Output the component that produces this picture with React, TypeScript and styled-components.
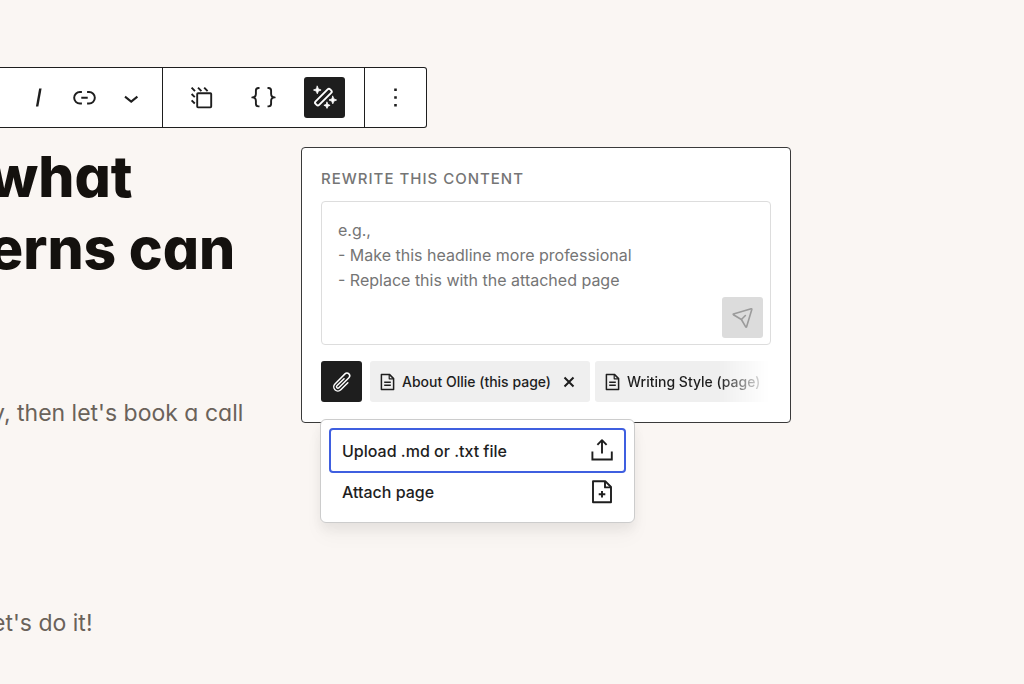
import React from "react";
import styled, { createGlobalStyle, css } from "styled-components";

const ink = "#1e1e1e";
const muted = "#757575";

const GlobalStyle = createGlobalStyle`
  *, *::before, *::after { box-sizing: border-box; }
  body {
    margin: 0;
    background: #faf6f3;
    color: ${ink};
    font-family: Inter, "Liberation Sans", sans-serif;
  }
  button, textarea { font: inherit; color: inherit; }
`;

const Canvas = styled.main`
  position: relative;
  min-height: 100vh;
  padding-top: 67px;
  overflow: hidden;
`;

const ToolbarAnchor = styled.div`
  position: relative;
  display: flex;
`;

const Toolbar = styled.div`
  display: flex;
  height: 61px;
  background: #fff;
  border: 1px solid ${ink};
  border-left: 0;
  border-radius: 0 3px 3px 0;
`;

const ToolbarGroup = styled.div<{ $spread?: boolean }>`
  display: flex;
  align-items: center;
  gap: ${(p) => (p.$spread ? 20 : 5)}px;
  padding: ${(p) => (p.$spread ? "0 19px" : "0 11px 0 18px")};
  & + & {
    border-left: 1px solid ${ink};
  }
  &:last-child {
    padding: 0 10px;
  }
`;

const IconButton = styled.button<{ $tone?: "dark" | "disabled" }>`
  flex: none;
  display: flex;
  align-items: center;
  justify-content: center;
  width: 41px;
  height: 41px;
  padding: 0;
  border: 0;
  border-radius: 3px;
  background: transparent;
  ${(p) =>
    p.$tone === "dark" &&
    css`
      background: ${ink};
      color: #fff;
    `}
  ${(p) =>
    p.$tone === "disabled" &&
    css`
      background: #dcdcdc;
      color: #9b9b9b;
    `}
`;

const Copy = styled.article`
  padding-top: 13px;
  white-space: nowrap;
  font-feature-settings: "cv11";
`;

const Headline = styled.h1`
  margin: 0 0 0 -11px;
  color: #14110e;
  font-size: 57px;
  line-height: 72px;
  font-weight: 800;
`;

const Paragraph = styled.p`
  margin: 110px 0 0 -8px;
  color: #6a625a;
  font-size: 23px;
  line-height: 36px;
  & + & {
    margin-top: 174px;
  }
`;

const Popover = styled.form`
  position: absolute;
  top: 80px;
  left: 301px;
  width: 490px;
  padding: 20px 19px;
  background: #fff;
  border: 1px solid #3a3a3a;
  border-radius: 4px;
`;

const PopoverLabel = styled.label`
  display: block;
  margin-bottom: 11px;
  color: ${muted};
  font-size: 15px;
  line-height: 22px;
  font-weight: 500;
  letter-spacing: 1px;
  text-transform: uppercase;
`;

const PromptBox = styled.div`
  display: flex;
  align-items: flex-end;
  height: 144px;
  padding-right: 7px;
  padding-bottom: 6px;
  border: 1px solid #dddddd;
  border-radius: 4px;
`;

const PromptInput = styled.textarea`
  flex: 1;
  min-width: 0;
  align-self: stretch;
  padding: 16px 0 0 16px;
  border: 0;
  outline: 0;
  resize: none;
  background: transparent;
  font-size: 16px;
  line-height: 25px;
  &::placeholder {
    color: ${muted};
    opacity: 1;
  }
`;

const AttachmentRow = styled.div`
  display: flex;
  gap: 8px;
  margin-top: 16px;
`;

const AttachAnchor = styled.div`
  position: relative;
`;

const ChipList = styled.ul`
  flex: 1;
  min-width: 0;
  display: flex;
  gap: 5px;
  margin: 0;
  padding: 0;
  overflow: hidden;
  list-style: none;
  mask-image: linear-gradient(to right, #000 calc(100% - 52px), transparent calc(100% - 2px));
`;

const Chip = styled.li`
  flex: none;
  display: flex;
  align-items: center;
  height: 41px;
  padding: 0 15px 0 10px;
  background: #efefef;
  border-radius: 3px;
  font-size: 14px;
  line-height: 20px;
  font-weight: 500;
`;

const ChipLabel = styled.span`
  margin-left: 7px;
`;

const RemoveButton = styled.button`
  display: flex;
  margin-left: 12px;
  padding: 0;
  border: 0;
  background: transparent;
`;

const Menu = styled.div`
  position: absolute;
  z-index: 1;
  top: 58px;
  left: -1px;
  width: 315px;
  padding: 10px;
  background: #fff;
  border: 1px solid #cccccc;
  border-radius: 6px;
  box-shadow: 0 6px 12px rgba(0, 0, 0, 0.06), 0 14px 20px rgba(0, 0, 0, 0.03);
`;

const MenuItem = styled.button<{ $focused?: boolean }>`
  display: flex;
  align-items: center;
  justify-content: space-between;
  width: 100%;
  height: 41px;
  padding: 0 10px 0 11px;
  border: 0;
  border-radius: 2px;
  background: transparent;
  font-size: 16px;
  line-height: 24px;
  font-weight: 500;
  outline: ${(p) => (p.$focused ? "2px solid #3f5fe0" : "0")};
`;

function WordIcon({ d }: { d: string }) {
  return (
    <svg width="31" height="31" viewBox="0 0 24 24" fill="currentColor" aria-hidden="true">
      <path d={d} />
    </svg>
  );
}

function StrokeIcon({
  size,
  box = size,
  width = 2,
  cap = "round",
  children,
}: {
  size: number;
  box?: number;
  width?: number;
  cap?: "round" | "butt";
  children: React.ReactNode;
}) {
  return (
    <svg
      width={size}
      height={size}
      viewBox={`0 0 ${box} ${box}`}
      fill="none"
      stroke="currentColor"
      strokeWidth={width}
      strokeLinecap={cap}
      strokeLinejoin="round"
      aria-hidden="true"
    >
      {children}
    </svg>
  );
}

const PageIcon = () => (
  <svg width="15" height="18" viewBox="0 0 15 18" fill="none" stroke="currentColor" strokeWidth="1.5" strokeLinejoin="round" aria-hidden="true">
    <path d="M1.4 1.4h8l4.2 4.2v11H1.4z" />
    <path d="M9.2 1.6v4.2h4.2" strokeWidth="1.2" />
    <path d="M4.2 9.3h6.6M4.2 12.3h6.6" strokeWidth="1.4" />
  </svg>
);

const CloseIcon = () => (
  <StrokeIcon size={12} width={2} cap="butt">
    <path d="M1.5 1.5l9 9M10.5 1.5l-9 9" />
  </StrokeIcon>
);

export default function App() {
  return (
    <>
      <GlobalStyle />
      <Canvas>
        <ToolbarAnchor>
          <Toolbar role="toolbar" aria-label="Block tools">
            <ToolbarGroup>
              <IconButton type="button" aria-label="Italic">
                <WordIcon d="M12.5 5L10 19h1.9l2.5-14z" />
              </IconButton>
              <IconButton type="button" aria-label="Link">
                <WordIcon d="M10 17.389H8.444A5.194 5.194 0 1 1 8.444 7H10v1.5H8.444a3.694 3.694 0 0 0 0 7.389H10v1.5ZM14 7h1.556a5.194 5.194 0 0 1 0 10.39H14v-1.5h1.556a3.694 3.694 0 0 0 0-7.39H14V7Zm-4.5 6h5v-1.5h-5V13Z" />
              </IconButton>
              <IconButton type="button" aria-label="More formatting">
                <StrokeIcon size={30} cap="butt">
                  <path d="M9 13.6l6.2 5 6.2-5" strokeLinejoin="miter" />
                </StrokeIcon>
              </IconButton>
            </ToolbarGroup>
            <ToolbarGroup $spread>
              <IconButton type="button" aria-label="Pattern">
                <StrokeIcon size={30} width={1.9} cap="butt">
                  <rect x="9.2" y="10.2" width="14" height="14.2" rx="0.8" />
                  <path d="M3.6 4.6l3.4 3.6M10 4.6l3.4 3.6M16.2 4.6l3.4 3.6M3.6 11l3.2 3.2M3.6 17.3l3.2 3.2" />
                </StrokeIcon>
              </IconButton>
              <IconButton type="button" aria-label="Custom code">
                <StrokeIcon size={31} width={1.9} cap="butt">
                  <path d="M11.5 6h-1q-2.6 0-2.6 2.6v3.2q0 3.6-3.6 3.6 3.6 0 3.6 3.6v2.8q0 2.6 2.6 2.6h1" />
                  <path d="M19.5 6h1q2.6 0 2.6 2.6v3.2q0 3.6 3.6 3.6-3.6 0-3.6 3.6v2.8q0 2.6-2.6 2.6h-1" />
                </StrokeIcon>
              </IconButton>
              <IconButton type="button" $tone="dark" aria-label="Rewrite with AI" aria-pressed="true">
                <StrokeIcon size={30} width={1.9}>
                  <rect x="3.1" y="11.6" width="20.6" height="5" rx="1.8" transform="rotate(-45 13.4 14.1)" />
                  <path
                    d="M7.3 3.2l1.1 2.7 2.7 1.1-2.7 1.1-1.1 2.7-1.1-2.7L3.5 7l2.7-1.1zM22.8 13.2l1.1 2.7 2.7 1.1-2.7 1.1-1.1 2.7-1.1-2.7-2.7-1.1 2.7-1.1zM17 19.2l.9 2.2 2.2.9-2.2.9-.9 2.2-.9-2.2-2.2-.9 2.2-.9z"
                    fill="currentColor"
                    strokeWidth="0.8"
                  />
                </StrokeIcon>
              </IconButton>
            </ToolbarGroup>
            <ToolbarGroup>
              <IconButton type="button" aria-label="Options">
                <WordIcon d="M13 19h-2v-2h2v2zm0-6h-2v-2h2v2zm0-6h-2V5h2v2z" />
              </IconButton>
            </ToolbarGroup>
          </Toolbar>

          <Popover onSubmit={(e) => e.preventDefault()}>
            <PopoverLabel htmlFor="prompt">Rewrite this content</PopoverLabel>
            <PromptBox>
              <PromptInput
                id="prompt"
                placeholder={"e.g.,\n- Make this headline more professional\n- Replace this with the attached page"}
              />
              <IconButton type="submit" $tone="disabled" disabled aria-label="Send">
                <StrokeIcon size={24} width={1.6}>
                  <path d="M2.4 7.9L20.2 2.8a.5.5 0 0 1 .6.6L15.6 20.8a.5.5 0 0 1-.9 0l-4.3-7.3-8-4.8a.5.5 0 0 1 0-.8z" />
                  <path d="M10.4 13.5l4-4" />
                </StrokeIcon>
              </IconButton>
            </PromptBox>

            <AttachmentRow>
              <AttachAnchor>
                <IconButton type="button" $tone="dark" aria-label="Attach" aria-haspopup="menu" aria-expanded="true">
                  <StrokeIcon size={22} box={24} width={1.6}>
                    <path d="m18.375 12.739-7.693 7.693a4.5 4.5 0 0 1-6.364-6.364l10.94-10.94A3 3 0 1 1 19.5 7.372L8.552 18.32m.009-.01-.01.01m5.699-9.941-7.81 7.81a1.5 1.5 0 0 0 2.112 2.13" />
                  </StrokeIcon>
                </IconButton>
                <Menu role="menu">
                  <MenuItem type="button" role="menuitem" $focused>
                    Upload .md or .txt file
                    <StrokeIcon size={24} width={1.9} cap="butt">
                      <path d="M2.4 12.6v7.9h19.4v-7.9" strokeLinejoin="miter" />
                      <path d="M12 14.6V1.6M7.4 5.8L12 1.2 16.6 5.8" />
                    </StrokeIcon>
                  </MenuItem>
                  <MenuItem type="button" role="menuitem">
                    Attach page
                    <StrokeIcon size={24} width={1.9} cap="butt">
                      <path d="M3 1.2h12.2L21 7v15.2H3z" />
                      <path d="M15 1.6v5.8h5.8" />
                      <path d="M12 11v6.6M8.7 14.3h6.6" />
                    </StrokeIcon>
                  </MenuItem>
                </Menu>
              </AttachAnchor>
              <ChipList>
                <Chip>
                  <PageIcon />
                  <ChipLabel>About Ollie (this page)</ChipLabel>
                  <RemoveButton type="button" aria-label="Remove About Ollie">
                    <CloseIcon />
                  </RemoveButton>
                </Chip>
                <Chip>
                  <PageIcon />
                  <ChipLabel>Writing Style (page)</ChipLabel>
                  <RemoveButton type="button" aria-label="Remove Writing Style">
                    <CloseIcon />
                  </RemoveButton>
                </Chip>
              </ChipList>
            </AttachmentRow>
          </Popover>
        </ToolbarAnchor>

        <Copy>
          <Headline>
            what
            <br />
            erns can
          </Headline>
          <Paragraph>y, then let's book a call</Paragraph>
          <Paragraph>et's do it!</Paragraph>
        </Copy>
      </Canvas>
    </>
  );
}
